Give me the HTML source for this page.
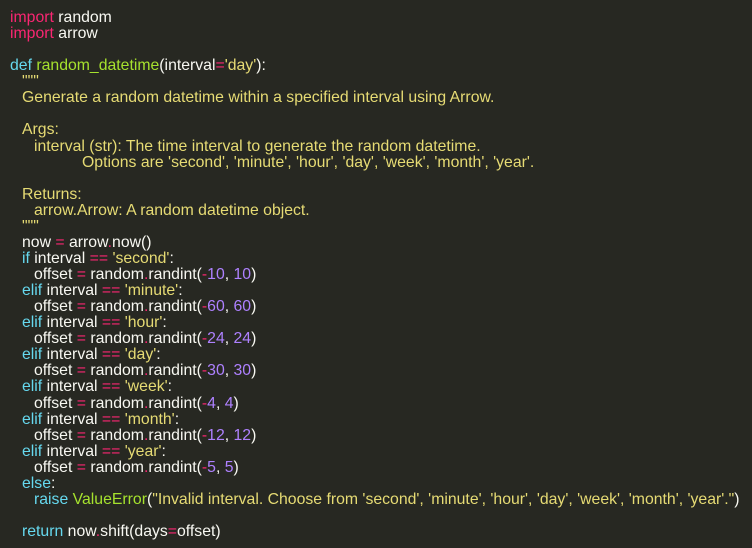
<!DOCTYPE html>
<html><head><meta charset="utf-8"><style>
html,body{margin:0;padding:0;background:#272822;width:752px;height:548px;overflow:hidden}
pre{margin:0;padding:10px 0 0 10px;font-family:"Liberation Sans",sans-serif;font-size:15.8px;line-height:16.06px;color:#f8f8f2;white-space:pre}
.k{color:#f92672}.b{color:#66d9ef}.g{color:#a6e22e}.s{color:#e6db74}.n{color:#ae81ff}
i{font-style:normal;display:inline-block}
.i1{width:12px}.i2{width:24px}.i6{width:72px}
</style></head><body><pre><span class="k">import</span> random
<span class="k">import</span> arrow

<span class="b">def</span> <span class="g">random_datetime</span>(interval<span class="k">=</span><span class="s">'day'</span>):
<i class="i1"></i><span class="s">"""</span>
<i class="i1"></i><span class="s">Generate a random datetime within a specified interval using Arrow.</span>

<i class="i1"></i><span class="s">Args:</span>
<i class="i2"></i><span class="s">interval (str): The time interval to generate the random datetime.</span>
<i class="i6"></i><span class="s">Options are 'second', 'minute', 'hour', 'day', 'week', 'month', 'year'.</span>

<i class="i1"></i><span class="s">Returns:</span>
<i class="i2"></i><span class="s">arrow.Arrow: A random datetime object.</span>
<i class="i1"></i><span class="s">"""</span>
<i class="i1"></i>now <span class="k">=</span> arrow<span class="k">.</span>now()
<i class="i1"></i><span class="b">if</span> interval <span class="k">==</span> <span class="s">'second'</span>:
<i class="i2"></i>offset <span class="k">=</span> random<span class="k">.</span>randint(<span class="k">-</span><span class="n">10</span>, <span class="n">10</span>)
<i class="i1"></i><span class="b">elif</span> interval <span class="k">==</span> <span class="s">'minute'</span>:
<i class="i2"></i>offset <span class="k">=</span> random<span class="k">.</span>randint(<span class="k">-</span><span class="n">60</span>, <span class="n">60</span>)
<i class="i1"></i><span class="b">elif</span> interval <span class="k">==</span> <span class="s">'hour'</span>:
<i class="i2"></i>offset <span class="k">=</span> random<span class="k">.</span>randint(<span class="k">-</span><span class="n">24</span>, <span class="n">24</span>)
<i class="i1"></i><span class="b">elif</span> interval <span class="k">==</span> <span class="s">'day'</span>:
<i class="i2"></i>offset <span class="k">=</span> random<span class="k">.</span>randint(<span class="k">-</span><span class="n">30</span>, <span class="n">30</span>)
<i class="i1"></i><span class="b">elif</span> interval <span class="k">==</span> <span class="s">'week'</span>:
<i class="i2"></i>offset <span class="k">=</span> random<span class="k">.</span>randint(<span class="k">-</span><span class="n">4</span>, <span class="n">4</span>)
<i class="i1"></i><span class="b">elif</span> interval <span class="k">==</span> <span class="s">'month'</span>:
<i class="i2"></i>offset <span class="k">=</span> random<span class="k">.</span>randint(<span class="k">-</span><span class="n">12</span>, <span class="n">12</span>)
<i class="i1"></i><span class="b">elif</span> interval <span class="k">==</span> <span class="s">'year'</span>:
<i class="i2"></i>offset <span class="k">=</span> random<span class="k">.</span>randint(<span class="k">-</span><span class="n">5</span>, <span class="n">5</span>)
<i class="i1"></i><span class="b">else</span>:
<i class="i2"></i><span class="b">raise</span> <span class="g">ValueError</span>(<span class="s">"Invalid interval. Choose from 'second', 'minute', 'hour', 'day', 'week', 'month', 'year'."</span>)

<i class="i1"></i><span class="b">return</span> now<span class="k">.</span>shift(days<span class="k">=</span>offset)
</pre></body></html>
